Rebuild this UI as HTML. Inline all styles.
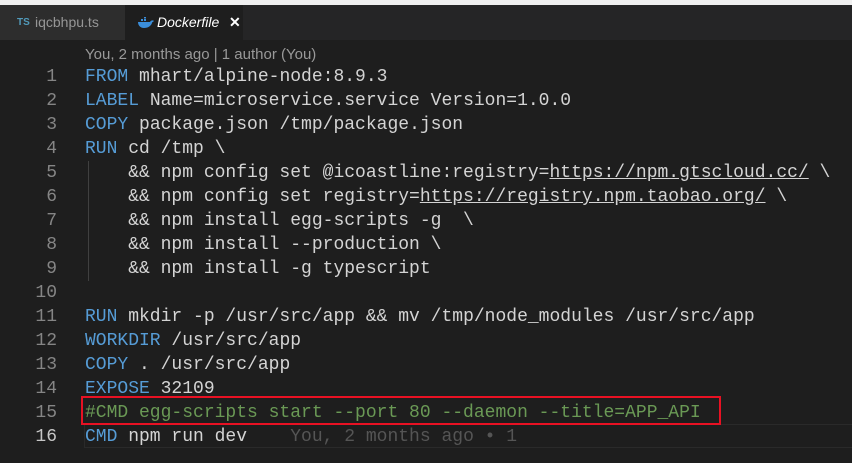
<!DOCTYPE html><html><head><style>
body{margin:0;width:852px;height:463px;background:#1e1e1e;overflow:hidden;position:relative;font-family:"Liberation Sans",sans-serif}
.top{position:absolute;left:0;top:0;width:852px;height:5px;background:#f0f0f0}
.tabs{position:absolute;top:5px;left:0;width:852px;height:35px;background:#252526}
.tab{position:absolute;top:0;height:35px;line-height:35px;font-size:14px}
.code{position:absolute;left:0;top:65px;font-family:"Liberation Mono",monospace;font-size:18px;color:#d4d4d4}
.l{height:24px;line-height:24px;position:relative}
.n{position:absolute;left:0;width:57px;text-align:right;color:#858585}
.t{position:absolute;left:85px;white-space:pre}
.k{color:#569cd6}.c{color:#6a9955}.u{text-decoration:underline}
.g{color:#555}
</style></head><body>
<div class="top"></div>
<div class="tabs">
<div class="tab" style="left:0;width:125px;background:#2d2d2d;color:#969696"><span style="position:absolute;left:17px;font-size:10px;font-weight:bold;color:#519aba">TS</span><span style="position:absolute;left:35px">iqcbhpu.ts</span></div>
<div class="tab" style="left:125px;width:118px;background:#1e1e1e;color:#fff"><svg style="position:absolute;left:12px;top:12px" width="17" height="11" viewBox="0 0 17 11"><path d="M1 5h12c1-2 3-2 4-1-1 1-2 1-2 2-1 3-4 5-8 5C3 11 1 8 1 5z" fill="#3b8eda"/><rect x="4" y="2" width="2" height="2" fill="#3b8eda"/><rect x="7" y="2" width="2" height="2" fill="#3b8eda"/><rect x="7" y="0" width="2" height="1.5" fill="#3b8eda"/></svg><span style="position:absolute;left:32px;font-style:italic">Dockerfile</span><span style="position:absolute;left:104px;font-weight:bold">✕</span></div>
</div>
<div style="position:absolute;left:85px;top:46px;font-size:15px;color:#999">You, 2 months ago | 1 author (You)</div>
<div style="position:absolute;left:84px;top:424px;width:768px;height:22px;border:1px solid #2a2a2a;border-right:none"></div>
<div style="position:absolute;left:81px;top:396px;width:636px;height:25px;border:2px solid #e81123"></div>
<div style="position:absolute;left:88px;top:161px;width:1px;height:120px;background:#404040"></div>
<div class="code">
<div class="l"><span class="n">1</span><span class="t"><span class="k">FROM</span> mhart/alpine-node:8.9.3</span></div>
<div class="l"><span class="n">2</span><span class="t"><span class="k">LABEL</span> Name=microservice.service Version=1.0.0</span></div>
<div class="l"><span class="n">3</span><span class="t"><span class="k">COPY</span> package.json /tmp/package.json</span></div>
<div class="l"><span class="n">4</span><span class="t"><span class="k">RUN</span> cd /tmp \</span></div>
<div class="l"><span class="n">5</span><span class="t">    &amp;&amp; npm config set @icoastline:registry=<span class="u">https://npm.gtscloud.cc/</span> \</span></div>
<div class="l"><span class="n">6</span><span class="t">    &amp;&amp; npm config set registry=<span class="u">https://registry.npm.taobao.org/</span> \</span></div>
<div class="l"><span class="n">7</span><span class="t">    &amp;&amp; npm install egg-scripts -g  \</span></div>
<div class="l"><span class="n">8</span><span class="t">    &amp;&amp; npm install --production \</span></div>
<div class="l"><span class="n">9</span><span class="t">    &amp;&amp; npm install -g typescript</span></div>
<div class="l"><span class="n">10</span><span class="t"></span></div>
<div class="l"><span class="n">11</span><span class="t"><span class="k">RUN</span> mkdir -p /usr/src/app &amp;&amp; mv /tmp/node_modules /usr/src/app</span></div>
<div class="l"><span class="n">12</span><span class="t"><span class="k">WORKDIR</span> /usr/src/app</span></div>
<div class="l"><span class="n">13</span><span class="t"><span class="k">COPY</span> . /usr/src/app</span></div>
<div class="l"><span class="n">14</span><span class="t"><span class="k">EXPOSE</span> 32109</span></div>
<div class="l"><span class="n">15</span><span class="t c">#CMD egg-scripts start --port 80 --daemon --title=APP_API</span></div>
<div class="l"><span class="n" style="color:#c6c6c6">16</span><span class="t"><span class="k">CMD</span> npm run dev    <span class="g">You, 2 months ago • 1</span></span></div>
</div>
</body></html>
